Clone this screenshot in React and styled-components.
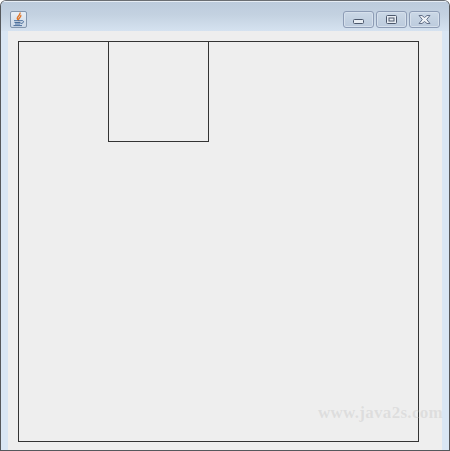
import styled, { createGlobalStyle } from "styled-components";

const Global = createGlobalStyle`
  html, body {
    margin: 0;
    padding: 0;
    background: #ffffff;
  }
  * {
    box-sizing: border-box;
  }
`;

const Frame = styled.div`
  width: 450px;
  height: 451px;
  display: flex;
  flex-direction: column;
  border: 1px solid #55585c;
  border-top-color: #6a6e73;
  border-radius: 6px 6px 0 0;
  background: #d9e6f4;
  overflow: hidden;
`;

const TitleBar = styled.div`
  height: 30px;
  flex: none;
  display: flex;
  align-items: flex-start;
  justify-content: space-between;
  padding: 9px 9px 0 9px;
  background: linear-gradient(to bottom, #bccbdc 0%, #c4d2e1 45%, #d5e2f0 100%);
  border-top: 1px solid #e6edf4;
`;

const AppIcon = styled.div`
  width: 17px;
  height: 17px;
  border: 1px solid #8497ae;
  border-radius: 2px;
  background: linear-gradient(to bottom, #e9eff6, #ccd9e7);
  display: flex;
  align-items: center;
  justify-content: center;

  svg {
    display: block;
  }
`;

const Controls = styled.div`
  display: flex;
  gap: 2px;
`;

const ControlButton = styled.div`
  width: 31px;
  height: 17px;
  padding-bottom: 3px;
  border: 1px solid #8d9cb5;
  border-radius: 3px;
  background: linear-gradient(to bottom, #cbd8e6 0%, #c3d1e1 50%, #bccbdd 100%);
  box-shadow: inset 0 0 0 1px #d6e0ec;
  display: flex;
  align-items: flex-end;
  justify-content: center;

  svg {
    display: block;
  }
`;

const ContentPane = styled.div`
  flex: 1;
  margin: 0 7px 7px 7px;
  padding: 10px;
  background: #eeeeee;
  position: relative;
`;

const Canvas = styled.div`
  width: 401px;
  height: 401px;
  border: 1px solid #333333;
  padding-left: 89px;
`;

const Square = styled.div`
  width: 101px;
  height: 100px;
  border: 1px solid #333333;
  border-top: none;
`;

const Watermark = styled.div`
  position: absolute;
  right: -1px;
  bottom: 29px;
  font-family: "Liberation Serif", serif;
  font-size: 17px;
  font-weight: bold;
  letter-spacing: 0.3px;
  color: rgba(190, 190, 190, 0.35);
  white-space: nowrap;
`;

function JavaIcon() {
  return (
    <svg width="15" height="15" viewBox="0 0 15 15">
      <path d="M9 0.5 C10 3 6 4 6.3 6.5 C6.5 7.3 7.3 8 7.3 8 C7 6.3 10.5 5.2 9.8 3" fill="none" stroke="#e0762a" strokeWidth="1.4" />
      <path d="M3 8.7 H10 M3.5 10.5 H9.5 M4 12 H9 M2.5 13.6 H11" stroke="#4a6f9c" strokeWidth="1" fill="none" />
      <path d="M10 8.7 C13.5 8 13.5 11.3 9.5 11.5" stroke="#4a6f9c" strokeWidth="1" fill="none" />
    </svg>
  );
}

function MinimizeGlyph() {
  return (
    <svg width="11" height="5" viewBox="0 0 11 5">
      <rect x="0.5" y="0.5" width="10" height="4" rx="1" fill="#e8edf3" stroke="#4c586c" />
    </svg>
  );
}

function MaximizeGlyph() {
  return (
    <svg width="11" height="9" viewBox="0 0 11 9">
      <rect x="0.5" y="0.5" width="10" height="8" rx="1" fill="#e8edf3" stroke="#4c586c" />
      <rect x="3" y="3" width="5" height="3" fill="#e8edf3" stroke="#4c586c" strokeWidth="1" />
    </svg>
  );
}

function CloseGlyph() {
  return (
    <svg width="13" height="9" viewBox="0 0 13 9">
      <polygon
        points="1,0.5 4,0.5 6.5,2.5 9,0.5 12,0.5 8.7,4.5 12,8.5 9,8.5 6.5,6.5 4,8.5 1,8.5 4.3,4.5"
        fill="#f0f3f7"
        stroke="#66728a"
        strokeWidth="1"
      />
    </svg>
  );
}

export default function App() {
  return (
    <>
      <Global />
      <Frame>
        <TitleBar>
          <AppIcon>
            <JavaIcon />
          </AppIcon>
          <Controls>
            <ControlButton>
              <MinimizeGlyph />
            </ControlButton>
            <ControlButton>
              <MaximizeGlyph />
            </ControlButton>
            <ControlButton>
              <CloseGlyph />
            </ControlButton>
          </Controls>
        </TitleBar>
        <ContentPane>
          <Canvas>
            <Square />
          </Canvas>
          <Watermark>www.java2s.com</Watermark>
        </ContentPane>
      </Frame>
    </>
  );
}
